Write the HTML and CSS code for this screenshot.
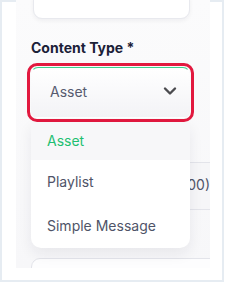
FILE: index.html
```html
<!DOCTYPE html>
<html lang="en">
<head>
    <meta charset="UTF-8">
    <meta name="viewport" content="width=device-width, initial-scale=1.0">
    <title>Content Type</title>
    <link rel="stylesheet" href="styles.css">
</head>
<body>
    <div class="frame">
        <div class="panel">
            <div class="prev-card"></div>

            <label class="field-label">Content Type *</label>

            <div class="select-ring">
                <div class="select-box">
                    <span class="select-value">Asset</span>
                    <svg class="chevron" width="14" height="10" viewBox="0 0 14 10">
                        <polyline points="2,2.5 7,7.5 12,2.5" fill="none" stroke="#4b4b4f" stroke-width="2.4" stroke-linecap="round" stroke-linejoin="round"/>
                    </svg>
                </div>

                <ul class="menu">
                    <li class="menu-item selected">Asset</li>
                    <li class="menu-item">Playlist</li>
                    <li class="menu-item">Simple Message</li>
                </ul>
            </div>

            <!-- Feld hinter dem Menü, nur das Ende ist sichtbar -->
            <div class="under-field">
                <span class="under-text">(00)</span>
            </div>

            <div class="next-card"></div>
        </div>
    </div>
</body>
</html>
```

FILE: styles.css
```css
body {
    margin: 0;
    padding: 0;
    width: 226px;
    height: 284px;
    background: #ffffff;
    font-family: Inter, "Noto Sans", Arial, sans-serif;
    overflow: hidden;
}

.frame {
    box-sizing: border-box;
    width: 224px;
    height: 282px;
    border: 2px solid #e6ecf2;
    background: #ffffff;
    padding-left: 14px;
}

.panel {
    width: 194px;
    height: 268px;
    margin-top: -2px;
    background: linear-gradient(180deg, #fbfbfc 0%, #f7f7f9 100%);
    padding-left: 15px;
    box-sizing: border-box;
    display: flex;
    flex-direction: column;
    overflow: hidden;
}

.prev-card {
    width: 155px;
    height: 27px;
    margin-top: -10px;
    margin-left: 2px;
    background: #ffffff;
    border: 1px solid #e8e9ee;
    border-radius: 9px;
    box-shadow: 0 2px 4px rgba(20, 20, 40, 0.05);
    flex-shrink: 0;
}

.field-label {
    margin-top: 20px;
    font-size: 14px;
    line-height: 17px;
    font-weight: 700;
    color: #1b2138;
}

.select-ring {
    position: relative;
    margin-top: 7px;
    margin-left: -4px;
    width: 167px;
    height: 59px;
    box-sizing: border-box;
    border: 3px solid #e2193f;
    border-radius: 10px;
    padding: 1px;
    flex-shrink: 0;
    z-index: 2;
}

.select-box {
    box-sizing: border-box;
    height: 100%;
    border: 1px solid transparent;
    border-top-color: #3fd08f;
    border-radius: 7px;
    background: linear-gradient(180deg, #ffffff 0%, #f3f3f6 100%);
    display: flex;
    align-items: center;
    justify-content: space-between;
    padding: 0 12px 3px 18px;
}

.select-value {
    font-size: 14px;
    color: #575b6f;
}

.chevron {
    display: block;
}

.menu {
    position: absolute;
    top: 100%;
    left: 1px;
    width: 159px;
    margin: 3px 0 0;
    padding: 0;
    list-style: none;
    background: #ffffff;
    border-radius: 0 0 10px 10px;
    box-shadow: 0 6px 14px rgba(30, 30, 60, 0.07);
    overflow: hidden;
}

.menu-item {
    height: 44px;
    line-height: 44px;
    padding-left: 16px;
    font-size: 14px;
    color: #4f5468;
}

.menu-item.selected {
    color: #1fbf72;
    background: #f7f7f9;
    height: 38px;
    line-height: 38px;
}

.under-field {
    margin-top: 40px;
    width: 200px;
    height: 48px;
    box-sizing: border-box;
    border-top: 1px solid #e3e4ea;
    border-bottom: 1px solid #e3e4ea;
    background: #f6f6f8;
    display: flex;
    align-items: center;
    justify-content: flex-end;
    padding: 0 21px 4px 0;
    flex-shrink: 0;
}

.under-text {
    font-size: 14px;
    color: #4f5468;
    white-space: nowrap;
}

.next-card {
    margin-top: 48px;
    width: 200px;
    height: 30px;
    background: #fdfdfe;
    border: 1px solid #e3e4ea;
    border-radius: 9px;
    flex-shrink: 0;
}
```
